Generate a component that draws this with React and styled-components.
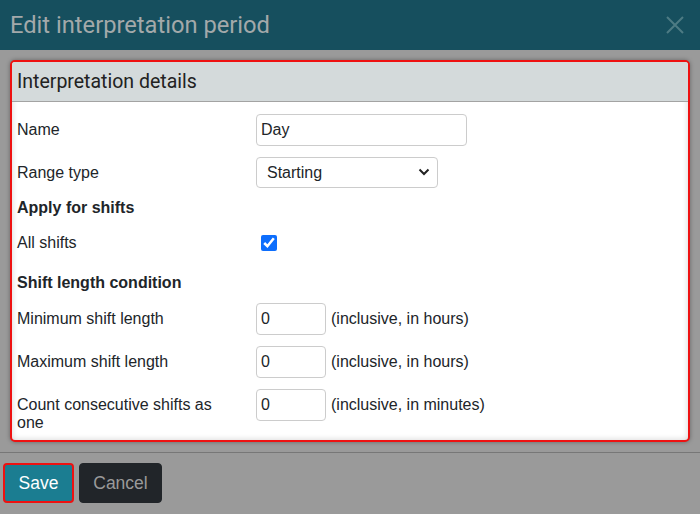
import React, { useState } from "react";
import styled, { createGlobalStyle } from "styled-components";

const GlobalStyle = createGlobalStyle`
  body {
    margin: 0;
    background: #9a9a9a;
    font-family: "Liberation Sans", Arial, sans-serif;
  }
`;

const Modal = styled.div`
  width: 700px;
  height: 514px;
  background: #9a9a9a;
  display: flex;
  flex-direction: column;
`;

const Header = styled.div`
  height: 50px;
  background: #164f5e;
  display: flex;
  align-items: center;
  justify-content: space-between;
  padding: 0 16px 0 10px;
  box-sizing: border-box;
`;

const Title = styled.h1`
  margin: 0;
  font-family: Roboto, "Liberation Sans", sans-serif;
  font-weight: 400;
  font-size: 23.7px;
  color: #a3a9aa;
`;

const CloseButton = styled.button`
  border: none;
  background: none;
  padding: 0;
  display: flex;
  color: #4d7b84;
  cursor: pointer;
`;

const Body = styled.div`
  padding: 10px 10px 10px;
  border-bottom: 1px solid #777;
`;

const Panel = styled.div`
  border: 2px solid #ee1111;
  border-radius: 5px;
  background: #fff;
  box-shadow: 0 0 4px rgba(0, 0, 0, 0.35), inset 0 0 6px rgba(0, 0, 0, 0.18);
  overflow: hidden;
`;

const PanelHeader = styled.div`
  height: 39px;
  background: #d4dadb;
  border-bottom: 1px solid #a3a3a3;
  display: flex;
  align-items: center;
  padding: 0 5px;
  font-family: Roboto, "Liberation Sans", sans-serif;
  font-size: 19.5px;
  color: #222;
`;

const PanelBody = styled.div`
  padding: 12px 5px 8px;
  display: flex;
  flex-direction: column;
  font-size: 16px;
  color: #212529;
`;

const Row = styled.div`
  display: grid;
  grid-template-columns: 239px 1fr;
  align-items: ${(p) => (p.$baseline ? "baseline" : "center")};
  min-height: ${(p) => p.$height || 32}px;
  margin-top: ${(p) => p.$top || 0}px;
`;

const Label = styled.label`
  padding-right: 15px;
  line-height: 18px;
`;

const SectionTitle = styled.div`
  font-weight: bold;
  line-height: 20px;
  margin-top: ${(p) => p.$top}px;
`;

const Field = styled.div`
  display: flex;
  align-items: center;
  gap: 5px;
`;

const TextInput = styled.input`
  box-sizing: border-box;
  width: ${(p) => p.$width}px;
  height: ${(p) => p.$height || 32}px;
  border: 1px solid #ccc;
  border-radius: 4px;
  padding: 0 4px;
  font-family: "Liberation Sans", Arial, sans-serif;
  font-size: 16px;
  color: #212529;
  outline: none;
`;

const SelectWrap = styled.div`
  position: relative;
  width: 182px;
`;

const Select = styled.select`
  appearance: none;
  box-sizing: border-box;
  width: 100%;
  height: 31px;
  border: 1px solid #ccc;
  border-radius: 4px;
  padding: 0 10px;
  background: #fff;
  font-family: "Liberation Sans", Arial, sans-serif;
  font-size: 16px;
  color: #212529;
`;

const Chevron = styled.svg`
  position: absolute;
  right: 8px;
  top: 11px;
  pointer-events: none;
`;

const Check = styled.input`
  width: 16px;
  height: 16px;
  margin: 0 0 0 5px;
  accent-color: #0d6efd;
`;

const Hint = styled.span`
  font-size: 16px;
`;

const Footer = styled.div`
  display: flex;
  gap: 5px;
  padding: 10px 3px;
`;

const Button = styled.button`
  box-sizing: border-box;
  height: 40px;
  width: ${(p) => (p.$primary ? 71 : 83)}px;
  padding: 0;
  border-radius: 4px;
  font-family: "Liberation Sans", Arial, sans-serif;
  font-size: 17.5px;
  cursor: pointer;
  background: ${(p) => (p.$primary ? "#1b7d91" : "#212529")};
  color: ${(p) => (p.$primary ? "#fff" : "#9a9a9a")};
  border: ${(p) => (p.$primary ? "2px solid #ee1111" : "1px solid #212529")};
`;

const App = () => {
  const [name, setName] = useState("Day");
  const [allShifts, setAllShifts] = useState(true);

  return (
    <Modal>
      <GlobalStyle />
      <Header>
        <Title>Edit interpretation period</Title>
        <CloseButton aria-label="Close">
          <svg width="18" height="18" viewBox="0 0 18 18">
            <path d="M1 1L17 17M17 1L1 17" stroke="currentColor" strokeWidth="2" />
          </svg>
        </CloseButton>
      </Header>
      <Body>
        <Panel>
          <PanelHeader>Interpretation details</PanelHeader>
          <PanelBody>
            <Row>
              <Label>Name</Label>
              <Field>
                <TextInput $width={211} value={name} onChange={(e) => setName(e.target.value)} />
              </Field>
            </Row>
            <Row $top={11} $height={31}>
              <Label>Range type</Label>
              <Field>
                <SelectWrap>
                  <Select defaultValue="Starting">
                    <option>Starting</option>
                    <option>Ending</option>
                  </Select>
                  <Chevron width="12" height="8" viewBox="0 0 12 8">
                    <path d="M1.5 1.5L6 6L10.5 1.5" fill="none" stroke="#222" strokeWidth="2" />
                  </Chevron>
                </SelectWrap>
              </Field>
            </Row>
            <SectionTitle $top={10}>Apply for shifts</SectionTitle>
            <Row $top={10} $height={30}>
              <Label>All shifts</Label>
              <Field>
                <Check type="checkbox" checked={allShifts} onChange={() => setAllShifts(!allShifts)} />
              </Field>
            </Row>
            <SectionTitle $top={15}>Shift length condition</SectionTitle>
            <Row $top={10}>
              <Label>Minimum shift length</Label>
              <Field>
                <TextInput $width={70} defaultValue="0" />
                <Hint>(inclusive, in hours)</Hint>
              </Field>
            </Row>
            <Row $top={11}>
              <Label>Maximum shift length</Label>
              <Field>
                <TextInput $width={70} defaultValue="0" />
                <Hint>(inclusive, in hours)</Hint>
              </Field>
            </Row>
            <Row $top={11} $baseline>
              <Label>Count consecutive shifts as one</Label>
              <Field>
                <TextInput $width={70} defaultValue="0" />
                <Hint>(inclusive, in minutes)</Hint>
              </Field>
            </Row>
          </PanelBody>
        </Panel>
      </Body>
      <Footer>
        <Button $primary>Save</Button>
        <Button>Cancel</Button>
      </Footer>
    </Modal>
  );
};

export default App;
